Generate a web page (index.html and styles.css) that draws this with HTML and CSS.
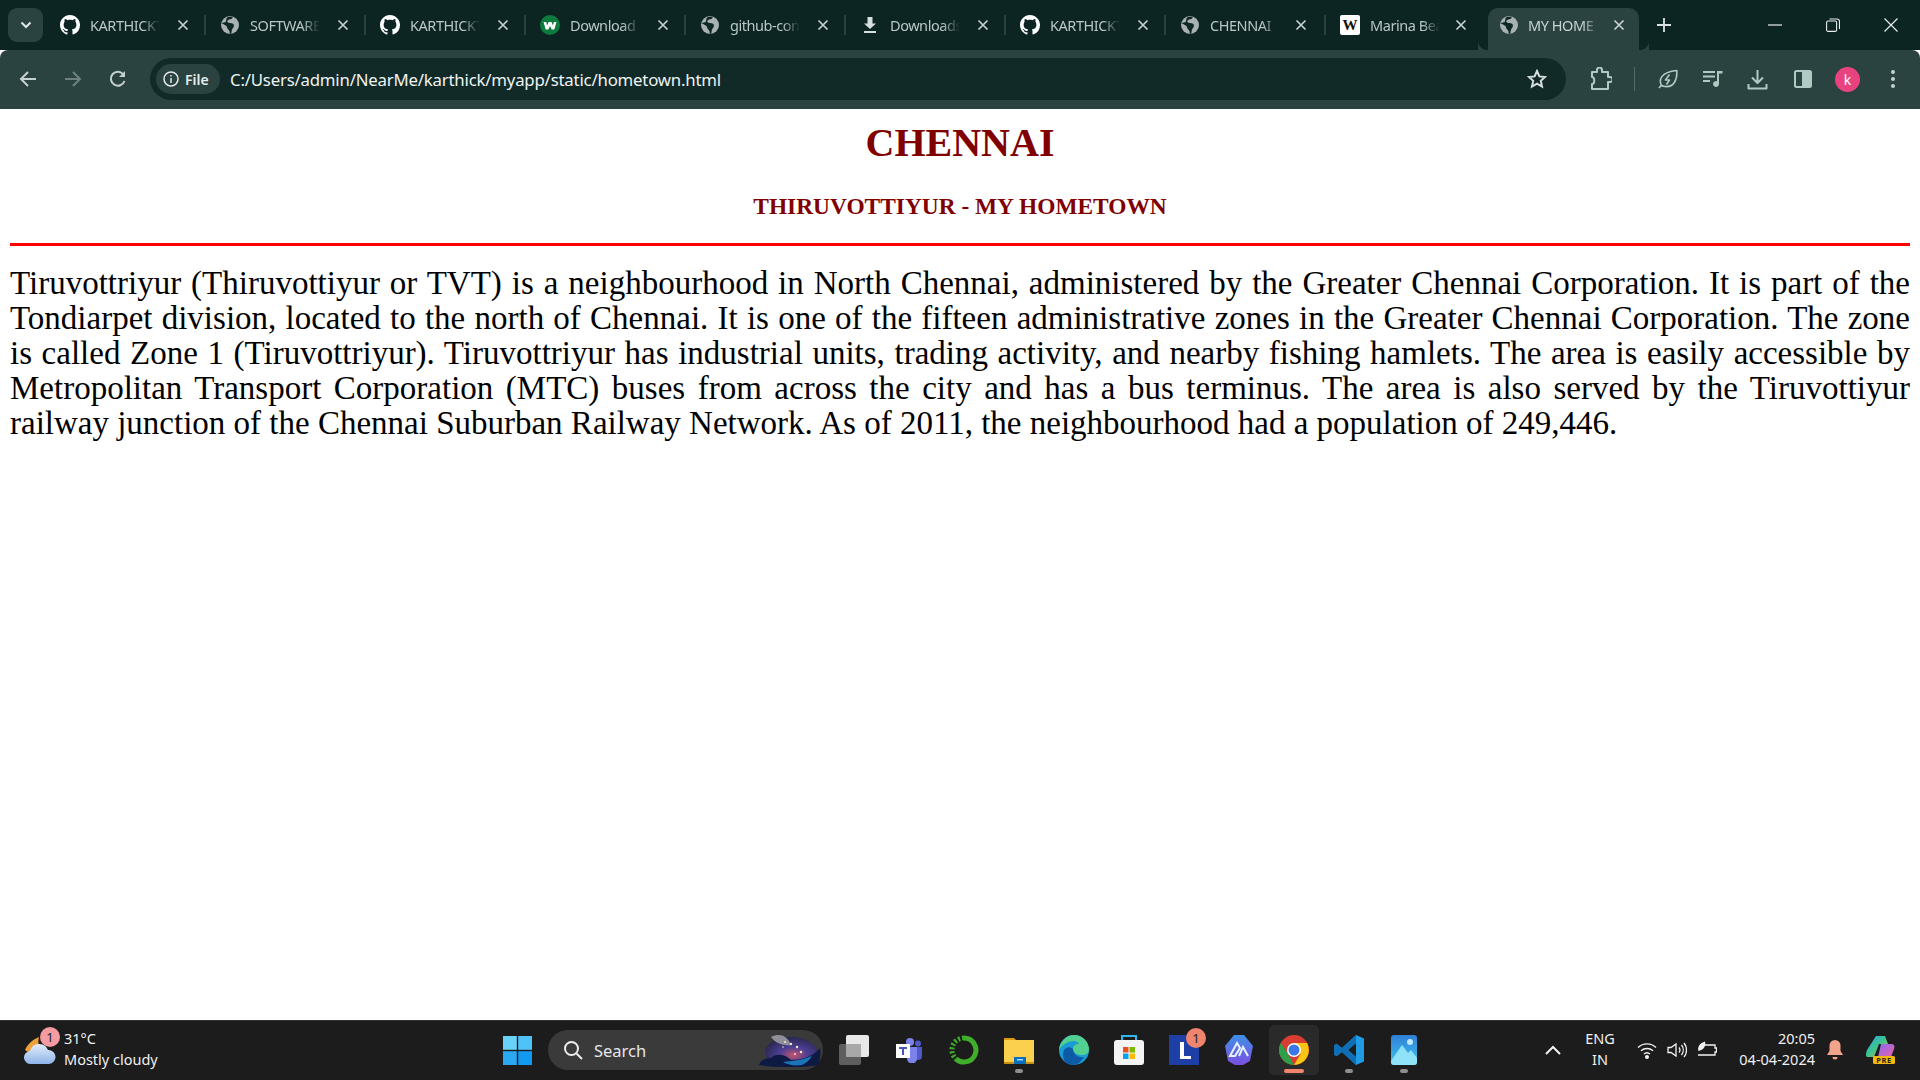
FILE: index.html
```html
<!DOCTYPE html>
<html lang="en">
<head>
<meta charset="utf-8">
<title>MY HOMETOWN</title>
<link rel="stylesheet" href="styles.css">
</head>
<body>
<svg class="defs" width="0" height="0" aria-hidden="true">
  <symbol id="gh" viewBox="0 0 16 16"><path fill="#fff" d="M8 0C3.58 0 0 3.58 0 8c0 3.54 2.29 6.53 5.47 7.59.4.07.55-.17.55-.38 0-.19-.01-.82-.01-1.49-2.01.37-2.53-.49-2.69-.94-.09-.23-.48-.94-.82-1.13-.28-.15-.68-.52-.01-.53.63-.01 1.08.58 1.23.82.72 1.21 1.87.87 2.33.66.07-.52.28-.87.51-1.07-1.78-.2-3.64-.89-3.64-3.95 0-.87.31-1.59.82-2.15-.08-.2-.36-1.02.08-2.12 0 0 .67-.21 2.2.82.64-.18 1.32-.27 2-.27.68 0 1.36.09 2 .27 1.53-1.04 2.2-.82 2.2-.82.44 1.1.16 1.92.08 2.12.51.56.82 1.27.82 2.15 0 3.07-1.87 3.75-3.65 3.95.29.25.54.73.54 1.48 0 1.07-.01 1.93-.01 2.2 0 .21.15.46.55.38A8.013 8.013 0 0016 8c0-4.42-3.58-8-8-8z"/></symbol>
  <symbol id="globe" viewBox="0 0 20 20"><circle cx="10" cy="10" r="9" fill="#a7b2b1"/><path fill="#0f2725" d="M12.500 1.400c.4 1.300-.4 2.200-1.500 2.700-1.400.6-3.300.5-3.700 2-.3 1.200.9 1.800 2 1.900 1.400.1 3 0 4 1 1.100 1.100.7 2.700-.2 3.800-1 1.200-1.500 2.700-1.700 5.800l-1.700.300c.2-2.400-.4-3.700-1.500-4.500-1-.8-1-1.900-1.400-2.800C6.300 10.500 4 9.500 1.500 8.300l.2-.9c1.900.5 3.600.3 4.200-.9.6-1.300 0-2.500 1-3.800.8-1 3.400-1.300 5.600-.9z"/><path fill="#a7b2b1" d="M13 3c1.300.2 3 1.300 4 3l-1 1.500c-1.300-.3-2.600-.8-3.300-2z"/></symbol>
  <symbol id="x" viewBox="0 0 12 12"><path stroke="#c6d2d0" stroke-width="1.700" d="M1.500 1.500l9 9M10.500 1.500l-9 9"/></symbol>
</svg>

<header class="tabstrip">
  <div class="tabmenu"><svg width="12" height="8" viewBox="0 0 12 8"><path d="M1.500 1.500L6 6l4.500-4.500" fill="none" stroke="#dfe7e6" stroke-width="2"/></svg></div>
  <div class="tab"><svg class="favicon"><use href="#gh"/></svg><span class="title">KARTHICKT</span><svg class="close"><use href="#x"/></svg></div>
  <div class="tab"><svg class="favicon"><use href="#globe"/></svg><span class="title">SOFTWARE</span><svg class="close"><use href="#x"/></svg></div>
  <div class="tab"><svg class="favicon"><use href="#gh"/></svg><span class="title">KARTHICKT</span><svg class="close"><use href="#x"/></svg></div>
  <div class="tab"><svg class="favicon" viewBox="0 0 20 20"><circle cx="10" cy="10" r="10" fill="#0d7a3e"/><path d="M3.500 7h2.700l.9 3.500L8.500 7h3l1.400 3.500.9-3.500h2.700l-2.200 7.500h-2.600L10 11l-1.700 3.500H5.700z" fill="#fff"/></svg><span class="title">Download</span><svg class="close"><use href="#x"/></svg></div>
  <div class="tab"><svg class="favicon"><use href="#globe"/></svg><span class="title">github-con</span><svg class="close"><use href="#x"/></svg></div>
  <div class="tab"><svg class="favicon" viewBox="0 0 20 20"><path d="M7.500 2h5v6.500H16L10 14 4 8.500h3.500zM4 16h12v2H4z" fill="#d5dfdd"/></svg><span class="title">Downloads</span><svg class="close"><use href="#x"/></svg></div>
  <div class="tab"><svg class="favicon"><use href="#gh"/></svg><span class="title">KARTHICKT</span><svg class="close"><use href="#x"/></svg></div>
  <div class="tab tab-tight"><svg class="favicon"><use href="#globe"/></svg><span class="title">CHENNAI</span><svg class="close"><use href="#x"/></svg></div>
  <div class="tab tab-tight tab-nosep"><svg class="favicon" viewBox="0 0 20 20"><rect width="20" height="20" rx="2" fill="#fff"/><text x="10" y="15" class="wiki">W</text></svg><span class="title">Marina Bea</span><svg class="close"><use href="#x"/></svg></div>
  <div class="tab active"><svg class="favicon"><use href="#globe"/></svg><span class="title">MY HOME</span><svg class="close"><use href="#x"/></svg></div>
  <div class="newtab"><svg width="14" height="14" viewBox="0 0 14 14"><path d="M7 0v14M0 7h14" stroke="#dbe4e2" stroke-width="1.800"/></svg></div>
  <div class="winctl">
    <span class="winbtn"><svg width="14" height="2" viewBox="0 0 14 2"><path d="M0 1h14" stroke="#e8eeed" stroke-width="1.200"/></svg></span>
    <span class="winbtn"><svg width="14" height="14" viewBox="0 0 14 14" fill="none" stroke="#e8eeed" stroke-width="1.100"><rect x=".6" y="3" width="10" height="10.400" rx="1.500"/><path d="M3.500 1h7.500a2.500 2.500 0 0 1 2.500 2.500V11"/></svg></span>
    <span class="winbtn"><svg width="14" height="14" viewBox="0 0 14 14"><path d="M.5.500l13 13M13.500.500l-13 13" stroke="#e8eeed" stroke-width="1.200"/></svg></span>
  </div>
</header>

<nav class="toolbar">
  <span class="tbtn"><svg width="18" height="18" viewBox="0 0 18 18" fill="none" stroke="#c5d1cf" stroke-width="2"><path d="M17 9H2M9 2L2 9l7 7"/></svg></span>
  <span class="tbtn"><svg width="18" height="18" viewBox="0 0 18 18" fill="none" stroke="#6f8280" stroke-width="2"><path d="M1 9h15M9 2l7 7-7 7"/></svg></span>
  <span class="tbtn"><svg width="18" height="18" viewBox="0 0 18 18" fill="none" stroke="#c5d1cf" stroke-width="2"><path d="M15.500 11a7 7 0 1 1-1-6.500"/><path d="M16 1v6h-6z" fill="#c5d1cf" stroke="none"/></svg></span>
  <div class="omnibox">
    <span class="chip"><svg width="16" height="16" viewBox="0 0 16 16" fill="none" stroke="#e4ebea" stroke-width="1.500"><circle cx="8" cy="8" r="7"/><path d="M8 7v5M8 4v1.600"/></svg>File</span>
    <span class="url">C:/Users/admin/NearMe/karthick/myapp/static/hometown.html</span>
    <svg class="star" width="20" height="20" viewBox="0 0 20 20" fill="none" stroke="#d5dfdd" stroke-width="2"><path d="M10 2l2.400 5.400 5.600.6-4.200 3.800 1.200 5.700L10 14.600l-5 2.900 1.200-5.700L2 8l5.600-.6z"/></svg>
  </div>
  <span class="tbtn"><svg width="22" height="24" viewBox="0 0 22 24" fill="none" stroke="#afcac3" stroke-width="2"><path d="M2 5h5V3a2 2 0 0 1 5 0v2h6v5h2a2 2 0 0 1 0 5h-2v7H2v-5c3 0 3-7 0-7z" stroke-linejoin="round"/></svg></span>
  <span class="tsep"></span>
  <span class="tbtn"><svg width="20" height="20" viewBox="0 0 20 20" fill="none" stroke="#afcac3" stroke-width="1.600" stroke-linejoin="round"><path d="M1 19l2.300-2.800C1 11.500 2 3 18.800 1.500 19.500 11 15.500 18.500 7 17.500c-1.500-.2-2.700-.7-3.700-1.300"/><path d="M11.500 5.500L7.500 11h4l-3 4.500"/></svg></span>
  <span class="tbtn"><svg width="20" height="20" viewBox="0 0 20 20" fill="#afcac3"><path d="M0 2h12v2H0zM0 6.500h12v2H0zM0 11h7v2H0zM14 2h5.500v2.500H16V15a3 3 0 1 1-2-2.800z"/></svg></span>
  <span class="tbtn"><svg width="21" height="21" viewBox="0 0 21 21" fill="none" stroke="#afcac3" stroke-width="2" stroke-linejoin="round"><path d="M10.500 1v12.500M5 8.500l5.500 5.500L16 8.500M1.500 15v4.500h18V15"/></svg></span>
  <span class="tbtn"><svg width="18" height="18" viewBox="0 0 18 18"><rect x="1" y="1" width="16" height="16" rx="1.500" fill="none" stroke="#afcac3" stroke-width="2"/><path d="M8 1h7.500A1.500 1.500 0 0 1 17 2.500v13a1.500 1.500 0 0 1-1.500 1.500H8z" fill="#afcac3"/></svg></span>
  <span class="tbtn"><span class="avatar">k</span></span>
  <span class="tbtn"><svg width="4" height="18" viewBox="0 0 4 18" fill="#c5d1cf"><circle cx="2" cy="2" r="2"/><circle cx="2" cy="9" r="2"/><circle cx="2" cy="16" r="2"/></svg></span>
</nav>

<main class="page">
  <h1 class="city">CHENNAI</h1>
  <h2 class="sub">THIRUVOTTIYUR - MY HOMETOWN</h2>
  <hr class="rule">
  <p class="body-text">Tiruvottriyur (Thiruvottiyur or TVT) is a neighbourhood in North Chennai, administered by the Greater Chennai Corporation. It is part of the Tondiarpet division, located to the north of Chennai. It is one of the fifteen administrative zones in the Greater Chennai Corporation. The zone is called Zone 1 (Tiruvottriyur). Tiruvottriyur has industrial units, trading activity, and nearby fishing hamlets. The area is easily accessible by Metropolitan Transport Corporation (MTC) buses from across the city and has a bus terminus. The area is also served by the Tiruvottiyur railway junction of the Chennai Suburban Railway Network. As of 2011, the neighbourhood had a population of 249,446.</p>
</main>

<footer class="taskbar">
  <div class="weather">
    <span class="wicon">
      <svg width="32" height="30" viewBox="0 0 32 30"><defs><linearGradient id="cloud" x1="0" y1="0" x2="0" y2="1"><stop offset="0" stop-color="#e3eefb"/><stop offset="1" stop-color="#8fb4ea"/></linearGradient></defs><path d="M15 2C8 5 3 10 1 15c5 4 12 3 16-1-3-3-3-8-2-12z" fill="#eda33a"/><path d="M7 29a6.500 6.500 0 0 1-1-13 9.500 9.500 0 0 1 18-1 7 7 0 0 1 1 14z" fill="url(#cloud)"/></svg>
      <span class="wbadge">1</span>
    </span>
    <span class="wtext"><span>31°C</span><span>Mostly cloudy</span></span>
  </div>
  <svg class="winlogo" width="29" height="29" viewBox="0 0 29 29"><rect width="13.800" height="13.800" fill="#69d2f8"/><rect x="15.200" width="13.800" height="13.800" fill="#4fc3f7"/><rect y="15.200" width="13.800" height="13.800" fill="#2aa9f2"/><rect x="15.200" y="15.200" width="13.800" height="13.800" fill="#129af0"/></svg>
  <div class="search">
    <svg width="20" height="20" viewBox="0 0 20 20" fill="none" stroke="#eee" stroke-width="2"><circle cx="8.500" cy="8.500" r="6.500"/><path d="M13.500 13.500L19 19"/></svg>
    <span class="search-label">Search</span>
    <svg class="search-art" width="62" height="33" viewBox="0 0 62 33"><defs><radialGradient id="sky" cx=".55" cy=".6" r=".6"><stop offset="0" stop-color="#c4546b"/><stop offset=".45" stop-color="#4b3f94"/><stop offset="1" stop-color="#2a2750"/></radialGradient></defs><ellipse cx="32" cy="18" rx="26" ry="15" fill="url(#sky)"/><path d="M12 3c8-4 16-2 20 8-8 1-16-2-20-8z" fill="#8f8f98"/><path d="M0 31c2-5 6-7 12-7 5-5 14-4 20 2 10 0 22-3 29-12 1 6 0 12-2 17-14 3-42 3-59 0z" fill="#0c1a44"/><path d="M24 28c8-1 20-2 29-6-3 5-6 7-10 9-7 1-14 0-19-3z" fill="#1b74b8"/><g fill="#f2e6d0"><circle cx="26" cy="8" r="1"/><circle cx="32" cy="10" r="1.200"/><circle cx="38" cy="13" r="1.200"/><circle cx="24" cy="13" r=".8"/><circle cx="42" cy="18" r="1.300"/><circle cx="36" cy="20" r="1"/></g></svg>
  </div>
  <div class="apps">
    <span class="app"><svg width="30" height="30" viewBox="0 0 30 30"><rect y="9" width="22" height="21" rx="2" fill="#5e5e5e"/><rect x="7" width="23" height="22" rx="2" fill="#e8e8e8"/><rect x="7" y="9" width="15" height="13" fill="#a8a8a8"/></svg></span>
    <span class="app"><svg width="26" height="26" viewBox="0 0 26 26"><circle cx="14" cy="5" r="4" fill="#7b83eb"/><circle cx="22" cy="6.500" r="3" fill="#5059c9"/><path d="M18 10h8v9a4 4 0 0 1-8 0z" fill="#5059c9"/><path d="M8 10h13v11a5 5 0 0 1-10 1z" fill="#7b83eb"/><rect y="7" width="14" height="14" fill="#fff"/><path d="M3 10h8v2H8v6H6v-6H3z" fill="#4b53bc"/></svg></span>
    <span class="app"><svg width="30" height="30" viewBox="0 0 30 30" fill="none"><path d="M15 3a12 12 0 1 1-8 21" stroke="#3fae2a" stroke-width="5"/><path d="M15 3A12 12 0 0 0 7 24" stroke="#3fae2a" stroke-width="5" stroke-dasharray="2 2"/></svg></span>
    <span class="app dot"><svg width="30" height="30" viewBox="0 0 30 30"><path d="M0 3h10l3 3h-13z" fill="#d99a12"/><rect y="5" width="30" height="24" fill="#fcd04f"/><rect y="27" width="30" height="2" fill="#c98f10"/><path d="M10 22h12v7H10z" fill="#0b6fbe"/><rect x="13" y="24" width="6" height="1.500" fill="#9fd6f5"/></svg></span>
    <span class="app"><svg width="30" height="30" viewBox="0 0 30 30"><circle cx="15" cy="15" r="15" fill="#1b9ad6"/><path d="M30 15c0 3-3 5-7 5s-9-2-9-6 3-5 6-5c-1-2-3-3-5-3C8 6 2 11 0 15 1 6 8 0 15 0c9 0 15 7 15 15z" fill="#52d08f"/><path d="M14 14c0 5 5 9 11 8-3 5-7 8-11 8C6 30 2 23 5 15c2-3 6-4 9-1z" fill="#0d5ba6"/></svg></span>
    <span class="app"><svg width="30" height="30" viewBox="0 0 30 30"><path d="M8 6V1h14v5" fill="none" stroke="#30b6ea" stroke-width="2"/><rect y="5" width="30" height="25" rx="3" fill="#f4f4f4"/><rect x="9" y="12" width="5.500" height="5.500" fill="#e94e24"/><rect x="15.500" y="12" width="5.500" height="5.500" fill="#7fba00"/><rect x="9" y="18.500" width="5.500" height="5.500" fill="#00a4ef"/><rect x="15.500" y="18.500" width="5.500" height="5.500" fill="#ffb900"/></svg></span>
    <span class="app"><svg width="30" height="30" viewBox="0 0 30 30"><rect width="30" height="30" fill="#1e3fa6"/><path d="M11 7h4v14h7v3H11z" fill="#fff"/></svg><span class="appbadge">1</span></span>
    <span class="app"><svg width="30" height="30" viewBox="0 0 30 30"><defs><linearGradient id="kite" x1="0" y1="0" x2="0" y2="1"><stop offset="0" stop-color="#3f8fe8"/><stop offset="1" stop-color="#7a4fe0"/></linearGradient></defs><path d="M10 0h10l9 11-3 15-7 4H11l-7-4L1 11z" fill="url(#kite)"/><path d="M6 21L13 8l3 5-5 8zM15 21l4-9 5 9" fill="none" stroke="#e9f0ff" stroke-width="2"/></svg></span>
    <span class="app current"><svg width="30" height="30" viewBox="0 0 30 30"><circle cx="15" cy="15" r="15" fill="#d93c30"/><path d="M15 8h13.100A15 15 0 0 1 15 30l6.500-11z" fill="#f7c513"/><path d="M15 30A15 15 0 0 1 1.900 7.700L9 19z" fill="#2e9e48"/><circle cx="15" cy="15" r="7" fill="#fff"/><circle cx="15" cy="15" r="5.500" fill="#3b78e7"/></svg></span>
    <span class="app dot"><svg width="30" height="30" viewBox="0 0 30 30"><path d="M22 0l8 3.500v23L22 30 8 17l-5.500 4.200L0 19.500v-9L2.500 8.800 8 13zM22 8l-8 7 8 7z" fill="#1f9ce4"/><path d="M22 0L8 13 2.500 8.800 0 10.500v9l2.500 1.700L8 17 22 30v-8l-8-7 8-7z" fill="#0f6fb6"/></svg></span>
    <span class="app dot"><svg width="26" height="30" viewBox="0 0 26 30"><defs><linearGradient id="ph" x1="0" y1="0" x2="0" y2="1"><stop offset="0" stop-color="#2f7fd6"/><stop offset="1" stop-color="#41c6f0"/></linearGradient></defs><rect width="26" height="30" rx="3" fill="url(#ph)"/><circle cx="19" cy="7" r="3" fill="#bfe9fb"/><path d="M0 26L11 10l6 8 3-3 6 8v4a3 3 0 0 1-3 3H3a3 3 0 0 1-3-3z" fill="#8fe2f7"/></svg></span>
  </div>
  <div class="tray">
    <svg class="tray-up" width="16" height="10" viewBox="0 0 16 10" fill="none" stroke="#f2f2f2" stroke-width="2"><path d="M1 9l7-7 7 7"/></svg>
    <span class="lang"><span>ENG</span><span>IN</span></span>
    <svg class="wifi" width="20" height="18" viewBox="0 0 20 18" fill="none" stroke="#f2f2f2" stroke-width="1.400"><path d="M1 6.500a13 13 0 0 1 18 0M4 9.800a9 9 0 0 1 12 0M7 13a4.500 4.500 0 0 1 6 0"/><circle cx="10" cy="16" r="1.300" fill="#f2f2f2"/></svg>
    <svg class="vol" width="20" height="18" viewBox="0 0 20 18" fill="none" stroke="#f2f2f2" stroke-width="1.300"><path d="M1 6.500h3L9 3v12l-5-3.500H1zM12 6.500a4 4 0 0 1 0 5M14.500 4a8 8 0 0 1 0 10M17 2a11 11 0 0 1 0 14"/></svg>
    <svg class="batt" width="20" height="18" viewBox="0 0 20 18" fill="none" stroke="#f2f2f2" stroke-width="1.300"><path d="M7 4h11v3h1.500v4H18v3H1"/><path d="M1.500 10C0 6 3 2 8 .5c1 4-.5 8-6.500 9.500z" fill="#f2f2f2" stroke="none"/></svg>
    <span class="clock"><span>20:05</span><span>04-04-2024</span></span>
    <svg class="bell" width="16" height="20" viewBox="0 0 16 20"><path d="M8 0a5.500 5.500 0 0 1 5.500 5.500V11l2.500 4H0l2.500-4V5.500A5.500 5.500 0 0 1 8 0z" fill="#f3a58c"/><path d="M5.500 17h5a2.500 2.500 0 0 1-5 0z" fill="#f3a58c"/></svg>
    <svg class="copilot" width="29" height="28" viewBox="0 0 29 28"><defs><linearGradient id="co" x1="0" y1="0" x2="1" y2="1"><stop offset="0" stop-color="#2aa5e8"/><stop offset=".5" stop-color="#3ec48d"/><stop offset="1" stop-color="#f0b53a"/></linearGradient><linearGradient id="co2" x1="0" y1="0" x2="1" y2="1"><stop offset="0" stop-color="#8a6cf0"/><stop offset="1" stop-color="#e860a8"/></linearGradient></defs><path d="M10 0h9l3 8H13L8 21H2C-1 21 0 17 1 14z" fill="url(#co)"/><path d="M15 8h10c3 0 4 2 3 5l-3 8H12z" fill="url(#co2)"/><rect x="7" y="20" width="22" height="8" rx="1.500" fill="#f5b90b"/><text x="18" y="26.500" class="pre">PRE</text></svg>
  </div>
</footer>
</body>
</html>
```
FILE: styles.css
```css
* { box-sizing: border-box; }
html, body { margin: 0; height: 100%; }
body {
  width: 1920px;
  height: 1080px;
  overflow: hidden;
  display: flex;
  flex-direction: column;
  background: #fff;
  font-family: "Noto Sans", "Open Sans", sans-serif;
}
.defs { position: absolute; }

/* tab strip */
.tabstrip {
  flex: 0 0 50px;
  display: flex;
  align-items: flex-end;
  padding-left: 8px;
  background: #0c2422;
  color: #b9c7c5;
}
.tabmenu {
  align-self: flex-start;
  margin-top: 8px;
  margin-right: 3px;
  width: 35px;
  height: 34px;
  border-radius: 9px;
  background: #2b4340;
  display: flex;
  align-items: center;
  justify-content: center;
}
.tab {
  position: relative;
  flex: 0 0 160px;
  height: 50px;
  display: flex;
  align-items: center;
  padding-left: 14px;
}
.tab::after {
  content: "";
  position: absolute;
  right: 0;
  top: 15px;
  height: 20px;
  width: 2px;
  background: #2b4340;
}
.tab-nosep::after { display: none; }
.favicon { width: 20px; height: 20px; flex: none; }
.wiki { font: bold 15px "Liberation Serif", serif; text-anchor: middle; fill: #111; }
.title {
  margin-left: 10px;
  width: 70px;
  flex: none;
  white-space: nowrap;
  font-size: 14.500px;
  letter-spacing: -.45px;
  -webkit-mask-image: linear-gradient(to right, #000 75%, transparent 100%);
  mask-image: linear-gradient(to right, #000 75%, transparent 100%);
}
.close { width: 12px; height: 12px; margin-left: 17px; flex: none; }
.tab-tight .close { margin-left: 15px; }
.tab.active {
  flex: 0 0 151px;
  height: 42px;
  margin-left: 2px;
  padding-left: 11px;
  padding-bottom: 8px;
  border-radius: 10px 10px 0 0;
  background: #2b4340;
  color: #c8d4d2;
}
.tab.active .title { margin-left: 9px; width: 72px; }
.tab.active .close { margin-left: 13px; }
.tab.active::after, .tab.active::before {
  content: "";
  position: absolute;
  bottom: 0;
  top: auto;
  width: 10px;
  height: 10px;
  background: radial-gradient(circle at 100% 0, transparent 10px, #2b4340 10.500px);
}
.tab.active::after { right: -10px; transform: scaleX(-1); }
.tab.active::before { left: -10px; }
.newtab {
  align-self: center;
  margin-left: 18px;
  width: 14px;
  height: 14px;
  display: flex;
}
.winctl { margin-left: auto; align-self: stretch; display: flex; }
.winbtn { width: 58px; display: flex; align-items: center; justify-content: center; }

/* toolbar */
.toolbar {
  flex: 0 0 59px;
  display: flex;
  align-items: center;
  padding-left: 5px;
  padding-bottom: 1px;
  border-radius: 8px 8px 0 0;
  background: #2b4340;
}
.tbtn {
  flex: 0 0 45px;
  height: 40px;
  display: flex;
  align-items: center;
  justify-content: center;
}
.omnibox {
  flex: 0 0 1416px;
  height: 42px;
  margin-left: 10px;
  margin-right: 12px;
  padding-left: 6px;
  padding-right: 19px;
  border-radius: 21px;
  background: #112a28;
  display: flex;
  align-items: center;
}
.chip {
  width: 64px;
  height: 30px;
  padding-left: 7px;
  border-radius: 15px;
  background: #2b4340;
  color: #e6edec;
  font-size: 14px;
  font-weight: 600;
  display: flex;
  align-items: center;
  gap: 6px;
}
.url {
  margin-left: 10px;
  color: #eef3f2;
  font-size: 16.800px;
  letter-spacing: -.2px;
  white-space: nowrap;
}
.star { margin-left: auto; }
.tsep { width: 1px; height: 24px; margin-left: 11px; margin-right: 10px; background: #566b68; }
.avatar {
  width: 25px;
  height: 25px;
  border-radius: 50%;
  background: #e8437f;
  color: #fff;
  font-size: 14px;
  display: flex;
  align-items: center;
  justify-content: center;
}

/* page content */
.page {
  flex: 1;
  min-height: 0;
  padding: 0 10px;
  color: #000;
  font-family: "Liberation Serif", "Times New Roman", serif;
}
.city {
  margin: 9px 0 0;
  font-size: 40px;
  line-height: 50px;
  font-weight: bold;
  text-align: center;
  color: #800000;
}
.sub {
  margin: 24px 0 0;
  font-size: 23.400px;
  line-height: 28px;
  font-weight: bold;
  text-align: center;
  color: #800000;
}
.rule {
  margin: 23px 0 0;
  height: 3px;
  border: 0;
  background: #f00;
}
.body-text {
  margin: 20px 0 0;
  font-size: 33px;
  line-height: 35px;
  text-align: justify;
  font-variant-numeric: oldstyle-nums;
}

/* taskbar */
.taskbar {
  flex: 0 0 60px;
  display: flex;
  align-items: center;
  padding-bottom: 1px;
  border-top: 1px solid #333;
  background: #1c1c1c;
  color: #f0f0f0;
}
.weather {
  flex: 0 0 503px;
  display: flex;
  align-items: center;
  gap: 8px;
  padding-left: 24px;
}
.wicon { position: relative; width: 32px; height: 30px; display: flex; }
.wbadge {
  position: absolute;
  left: 16px;
  top: -8px;
  width: 20px;
  height: 20px;
  border-radius: 50%;
  background: #f59ca2;
  color: #222;
  font-size: 13px;
  line-height: 20px;
  text-align: center;
}
.wtext { display: flex; flex-direction: column; margin-top: -2px; font-size: 14.500px; line-height: 21px; }
.winlogo { flex: none; }
.search {
  flex: 0 0 275px;
  height: 40px;
  margin: 0 16px;
  padding-left: 15px;
  border-radius: 20px;
  background: #3a3a3a;
  display: flex;
  align-items: center;
  position: relative;
}
.search-label { margin-left: 11px; font-size: 16.500px; color: #e6e6e6; }
.search-art { margin-left: auto; margin-right: 2px; }
.apps { display: flex; gap: 25px; align-items: center; }
.app {
  position: relative;
  width: 30px;
  height: 30px;
  display: flex;
  align-items: center;
  justify-content: center;
}
.app.dot::after {
  content: "";
  position: absolute;
  left: 11px;
  bottom: -8px;
  width: 8px;
  height: 4px;
  border-radius: 2px;
  background: #8e8e8e;
}
.app.current::before {
  content: "";
  position: absolute;
  inset: -10px;
  z-index: 0;
  border-radius: 5px;
  background: #2a2a2a;
}
.app.current svg { position: relative; }
.app.current::after {
  content: "";
  position: absolute;
  left: 5px;
  bottom: -8px;
  width: 20px;
  height: 4px;
  border-radius: 2px;
  background: #f0846c;
}
.appbadge {
  position: absolute;
  right: -7px;
  top: -7px;
  width: 20px;
  height: 20px;
  border-radius: 50%;
  background: #f0846c;
  color: #222;
  font-size: 13px;
  line-height: 20px;
  text-align: center;
}
.tray { margin-left: auto; display: flex; align-items: center; padding-right: 25px; }
.tray-up { flex: none; }
.lang {
  width: 40px;
  margin-left: 19px;
  margin-top: -2px;
  display: flex;
  flex-direction: column;
  align-items: center;
  font-size: 14.500px;
  line-height: 21px;
}
.wifi { margin-left: 17px; }
.vol, .batt { margin-left: 10px; }
.clock {
  width: 80px;
  margin-left: 18px;
  margin-top: -2px;
  display: flex;
  flex-direction: column;
  align-items: flex-end;
  font-size: 14.500px;
  line-height: 21px;
  white-space: nowrap;
}
.bell { margin-left: 12px; }
.copilot { margin-left: 23px; }
.pre { font: bold 7.500px "Noto Sans", sans-serif; text-anchor: middle; fill: #222; letter-spacing: .6px; }
```
